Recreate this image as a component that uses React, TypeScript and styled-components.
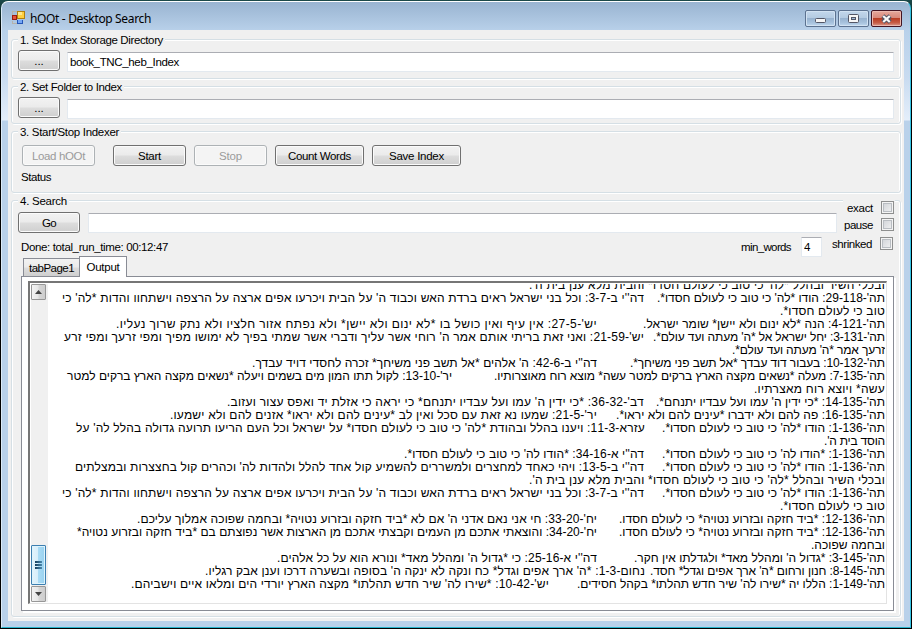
import React, { useLayoutEffect, useRef, useState } from 'react';
import styled, { createGlobalStyle, css } from 'styled-components';

const GlobalStyle = createGlobalStyle`
  *, *::before, *::after { box-sizing: border-box; }
  html, body { margin: 0; padding: 0; background: #000; overflow: hidden; }
  body {
    font-family: "Liberation Sans", Arial, sans-serif;
    font-size: 11.5px;
    line-height: 14px;
    color: #000;
  }
`;

const Desktop = styled.div`
  width: 912px;
  height: 629px;
  padding: 1px;
  background: linear-gradient(#1b4a4a, #000 30px);
`;

const Window = styled.div`
  height: 627px;
  display: flex;
  flex-direction: column;
  padding: 0 6px 6px;
  border: 1px solid #fff;
  border-left-color: #dcebf8;
  border-right-color: #35c4e4;
  border-bottom-color: #28b4cc;
  border-radius: 7px 7px 0 0;
  background: linear-gradient(#99b4d1 0, #b9d1ea 29px, #c8dbf0 75px, #e4eefa 118px, #b9d1ea 119px);
`;

const TitleBar = styled.header`
  flex: none;
  height: 28px;
  display: flex;
  align-items: flex-start;
  padding: 8px 2px 0 4px;
`;

const TitleIcon = styled.svg`
  width: 14px;
  height: 14px;
  margin-top: 1px;
`;

const Title = styled.div`
  margin: 1px auto 0 4px;
  font-family: "Noto Sans", sans-serif;
  font-size: 12px;
  line-height: 16px;
`;

const Captions = styled.div`
  display: flex;
  gap: 2px;
`;

const CaptionButton = styled.button<{ $close?: boolean }>`
  width: 31px;
  height: 17px;
  display: flex;
  align-items: center;
  justify-content: center;
  padding: 0;
  border: 1px solid ${p => (p.$close ? '#431422' : '#5c7290')};
  border-radius: 2px;
  background: ${p =>
    p.$close
      ? 'linear-gradient(#e5a89c 0, #d9897b 45%, #b93d24 50%, #c65c45 78%, #d99b90 100%)'
      : 'linear-gradient(#c3d7ec 0, #b4cbe2 45%, #98b3d0 50%, #a7c2dd 78%, #c0d8ee 100%)'};
  box-shadow: inset 0 0 0 1px ${p => (p.$close ? '#ebb9b0' : '#d2e2f2')};
`;

const Client = styled.main`
  flex: 1;
  min-height: 0;
  display: flex;
  flex-direction: column;
  gap: 7px;
  padding: 9px 3px 4px;
  background: #f0f0f0;
`;

const Group = styled.section<{ $h: number }>`
  flex: none;
  height: ${p => p.$h}px;
  border: 1px solid #d5dfe5;
  border-radius: 3px;
  box-shadow: 1px 1px 0 #fff, inset 1px 1px 0 #fff, inset -1px 0 0 #fff;
`;

const Legend = styled.div`
  width: max-content;
  height: 14px;
  margin: -7px 0 0 6px;
  padding: 0 2px;
  background: #f0f0f0;
`;

const Row = styled.div<{ $top: number; $left: number; $gap: number }>`
  display: flex;
  align-items: flex-start;
  gap: ${p => p.$gap}px;
  padding: ${p => p.$top}px 0 0 ${p => p.$left}px;
`;

const Button = styled.button<{ $w: number }>`
  flex: none;
  width: ${p => p.$w}px;
  height: 21px;
  display: flex;
  align-items: center;
  justify-content: center;
  padding: 0;
  border: 1px solid #707070;
  border-radius: 3px;
  background: linear-gradient(#f2f2f2 0, #ebebeb 48%, #dddddd 52%, #cfcfcf 100%);
  box-shadow: inset 0 0 0 1px #fbfbfb;
  color: #000;
  font: inherit;
  ${p =>
    p.disabled &&
    css`
      border-color: #adb2b5;
      background: #f4f4f4;
      color: #9b9b9b;
    `}
`;

const TextBox = styled.input<{ $w: number }>`
  width: ${p => p.$w}px;
  height: 20px;
  padding: 0 2px;
  border: 1px solid #e3e9ef;
  border-top-color: #abadb3;
  border-radius: 1px;
  outline: none;
  background: #fff;
  color: #000;
  font: inherit;
  line-height: 19px;
`;

const PathBox = styled(TextBox)`
  margin-top: 2px;
`;

const StatusLabel = styled.div`
  margin: 4px 0 0 9px;
`;

const SearchHead = styled.div`
  display: flex;
  height: 55px;
`;

const SearchMain = styled.div`
  flex: none;
  width: 831px;
`;

const QueryBox = styled(TextBox)`
  margin-top: 1px;
`;

const ResultRow = styled.div`
  display: flex;
  align-items: center;
  height: 20px;
  margin-top: 4px;
  padding: 0 21px 0 9px;
`;

const MinWords = styled.label`
  display: flex;
  align-items: center;
  gap: 10px;
  margin-left: auto;
`;

const Checks = styled.div`
  flex: none;
  width: 52px;
  display: flex;
  flex-direction: column;
  align-items: flex-end;
`;

const CheckRow = styled.label<{ $top: number; $right: number }>`
  display: flex;
  align-items: center;
  gap: 8px;
  height: 13px;
  margin-top: ${p => p.$top}px;
  padding: 0 ${p => p.$right}px 0 4px;
  background: #f0f0f0;
  box-shadow: 0 -1px 0 #f0f0f0;
  white-space: nowrap;
`;

const CheckBox = styled.span`
  flex: none;
  width: 13px;
  height: 13px;
  border: 1px solid #8e8f8f;
  background: linear-gradient(135deg, #cdd0d5, #f4f4f4);
  box-shadow: inset 0 0 0 1px #f4f4f4, inset 0 0 0 2px #b9bdc2;
`;

const TabStrip = styled.div`
  display: flex;
  align-items: flex-end;
  height: 20px;
  padding-left: 11px;
`;

const Tab = styled.div<{ $active?: boolean }>`
  height: ${p => (p.$active ? 21 : 18)}px;
  width: ${p => (p.$active ? 48 : 56)}px;
  margin-bottom: ${p => (p.$active ? -1 : 0)}px;
  padding-top: ${p => (p.$active ? 3 : 2)}px;
  text-align: center;
  border: 1px solid #898c95;
  border-bottom: 0;
  border-right-width: ${p => (p.$active ? 1 : 0)}px;
  background: ${p => (p.$active ? '#fff' : 'linear-gradient(#f2f2f2, #ebebeb 48%, #dddddd 52%, #cfcfcf)')};
  z-index: 1;
`;

const TabPanel = styled.div`
  width: 873px;
  height: 335px;
  margin-left: 9px;
  padding: 4px 6px;
  border: 1px solid #898c95;
  background: #fff;
  box-shadow: 2px 2px 0 #fff;
`;

const OutputBox = styled.div`
  height: 323px;
  display: flex;
  border: 2px solid #767676;
  border-right: 1px solid #e3e3e3;
  border-bottom: 1px solid #e3e3e3;
`;

const ScrollBar = styled.div`
  flex: none;
  width: 17px;
  display: flex;
  flex-direction: column;
  margin: 1px 0 1px 1px;
  background: #f0f0f0;
`;

const ScrollButton = styled.div`
  width: 15px;
  height: 16px;
  display: flex;
  align-items: center;
  justify-content: center;
  border: 1px solid #979797;
  border-radius: 1px;
  background: linear-gradient(90deg, #f3f3f3, #e6e6e6 48%, #d6d6d6 52%, #cdcdcd);
`;

const Thumb = styled.div`
  width: 15px;
  height: 40px;
  margin: auto 0 1px;
  display: flex;
  flex-direction: column;
  align-items: center;
  justify-content: center;
  gap: 1px;
  border: 1px solid #3c7fb1;
  border-radius: 1px;
  background: linear-gradient(90deg, #e3f4fc, #d6eefb 45%, #a9dbf5 50%, #98d1ef);
  box-shadow: inset 0 0 0 1px #ddf3fc;
`;

const Grip = styled.i`
  width: 7px;
  height: 2px;
  background: linear-gradient(90deg, #17415f, #4a87ac);
`;

const Lines = styled.div`
  flex: 1;
  min-width: 0;
  margin: 1px 1px 0 0;
  overflow: hidden;
  direction: rtl;
  font-size: 12px;
`;

const Line = styled.div`
  display: flex;
  height: 13px;
  line-height: 13px;
  &:first-child { margin-top: -5px; }
`;

const Piece = styled.span<{ $w: number; $gap: number }>`
  flex: none;
  width: ${p => p.$w}px;
  margin-right: ${p => p.$gap}px;
  white-space: nowrap;
`;

const Fitted = styled.span`
  display: inline-block;
  white-space: pre;
`;

/** Spreads a run of text evenly over a given width. */
function Fit({ w, children }: { w: number; children: string }) {
  const ref = useRef<HTMLSpanElement>(null);
  const [spacing, setSpacing] = useState(0);
  useLayoutEffect(() => {
    const el = ref.current;
    if (!el) return;
    el.style.letterSpacing = '0px';
    const next = (w - el.getBoundingClientRect().width) / children.length;
    el.style.letterSpacing = `${next}px`;
    setSpacing(next);
  }, [w, children]);
  return (
    <Fitted ref={ref} style={{ letterSpacing: spacing }}>
      {children}
    </Fitted>
  );
}

// text, width, distance from the piece to its right
type Run = [string, number, number?];

const TOV = "*לה' כי טוב כי לעולם חסדו*";
const BAYIT = `דה''י ב-3-7: וכל בני ישראל ראים ברדת האש וכבוד ה' על הבית ויכרעו אפים ארצה על הרצפה וישתחוו והדות *לה' כי`;
const KLEI = `ובכלי השיר ובהלל ${TOV} והבית מלא ענן בית ה'.`;
const HODU = `תה'-1-136: הודו ${TOV}.`;
const BEYAD = "תה'-12-136: *ביד חזקה ובזרוע נטויה* כי לעולם חסדו.";

const output: Run[][] = [
  [[KLEI, 356]],
  [[`תה'-29-118: הודו ${TOV}.`, 228], [BAYIT, 582, 13]],
  [['טוב כי לעולם חסדו*.', 105]],
  [["תה'-4-121: הנה *לא ינום ולא יישן* שומר ישראל.", 242], ["יש'-27-5: אין עיף ואין כושל בו *לא ינום ולא יישן* ולא נפתח אזור חלציו ולא נתק שרוך נעליו.", 481, 46]],
  [["תה'-3-131: יחל ישראל אל *ה' מעתה ועד עולם*.", 232], ["יש'-21-59: ואני זאת בריתי אותם אמר ה' רוחי אשר עליך ודברי אשר שמתי בפיך לא ימושו מפיך ומפי זרעך ומפי זרע", 580, 9]],
  [["זרעך אמר *ה' מעתה ועד עולם*.", 153]],
  [["תה'-10-132: בעבור דוד עבדך *אל תשב פני משיחך*.", 255], ["דה''י ב-42-6: ה' אלהים *אל תשב פני משיחך* זכרה לחסדי דויד עבדך.", 345, 33]],
  [["תה'-7-135: מעלה *נשאים מקצה הארץ ברקים למטר עשה* מוצא רוח מאוצרותיו.", 391], ["יר'-13-10: לקול תתו המון מים בשמים ויעלה *נשאים מקצה הארץ ברקים למטר", 385, 42]],
  [['עשה* ויוצא רוח מאצרתיו.', 131]],
  [["תה'-14-135: *כי ידין ה' עמו ועל עבדיו יתנחם*.", 229], ["דב'-36-32: *כי ידין ה' עמו ועל עבדיו יתנחם* כי יראה כי אזלת יד ואפס עצור ועזוב.", 417, 12]],
  [["תה'-16-135: פה להם ולא ידברו *עינים להם ולא יראו*.", 269], ["יר'-21-5: שמעו נא זאת עם סכל ואין לב *עינים להם ולא יראו* אזנים להם ולא ישמעו.", 427, 19]],
  [[HODU, 223], [`עזרא-11-3: ויענו בהלל ובהודת ${TOV} על ישראל וכל העם הריעו תרועה גדולה בהלל לה' על`, 569, 17]],
  [["הוסד בית ה'.", 61]],
  [["תה'-1-136: *הודו לה' כי טוב כי לעולם חסדו*.", 223], ["דה''י א-34-16: *הודו לה' כי טוב כי לעולם חסדו*.", 240, 18]],
  [[HODU, 223], ["דה''י ב-13-5: ויהי כאחד למחצרים ולמשררים להשמיע קול אחד להלל ולהדות לה' וכהרים קול בחצצרות ובמצלתים", 569, 18]],
  [[KLEI, 356]],
  [[HODU, 223], [BAYIT, 582, 18]],
  [['טוב כי לעולם חסדו*.', 105]],
  [[BEYAD, 266], ["יח'-33-20: חי אני נאם אדני ה' אם לא *ביד חזקה ובזרוע נטויה* ובחמה שפוכה אמלוך עליכם.", 460, 22]],
  [[BEYAD, 266], ["יח'-34-20: והוצאתי אתכם מן העמים וקבצתי אתכם מן הארצות אשר נפוצתם בם *ביד חזקה ובזרוע נטויה*", 520, 22]],
  [['ובחמה שפוכה.', 74]],
  [["תה'-3-145: *גדול ה' ומהלל מאד* ולגדלתו אין חקר.", 251], ["דה''י א-25-16: כי *גדול ה' ומהלל מאד* ונורא הוא על כל אלהים.", 320, 37]],
  [["תה'-8-145: חנון ורחום *ה' ארך אפים וגדל* חסד.", 235], ["נחום-1-3: *ה' ארך אפים וגדל* כח ונקה לא ינקה ה' בסופה ובשערה דרכו וענן אבק רגליו.", 440, 5]],
  [["תה'-1-149: הללו יה *שירו לה' שיר חדש תהלתו* בקהל חסידים.", 308], ["יש'-10-42: *שירו לה' שיר חדש תהלתו* מקצה הארץ יורדי הים ומלאו איים וישביהם.", 418, 28]],
];

function AppIcon() {
  return (
    <TitleIcon viewBox="0 0 14 14" shapeRendering="crispEdges">
      <path d="M.5 9.5v3h4M.5 4V.5H5" fill="none" stroke="#b6b2aa" />
      <rect x="0" y="4" width="5" height="5" fill="#9b1c10" />
      <rect x="1" y="5" width="3" height="3" fill="#e2523b" />
      <rect x="5" y="0" width="8" height="8" fill="#b08010" />
      <rect x="6" y="1" width="6" height="6" fill="#ffcf3f" />
      <rect x="6" y="1" width="4" height="3" fill="#ffe88a" />
      <rect x="5" y="9" width="6" height="4" fill="#2456b8" />
      <rect x="6" y="9" width="4" height="3" fill="#75a7f5" />
    </TitleIcon>
  );
}

function MinimizeGlyph() {
  return (
    <svg width="13" height="9" viewBox="0 0 13 9">
      <rect x="1.5" y="4.5" width="10" height="4" rx="1" fill="#f6f6f6" stroke="#535666" />
    </svg>
  );
}

function MaximizeGlyph() {
  return (
    <svg width="11" height="9" viewBox="0 0 11 9">
      <rect x=".5" y=".5" width="10" height="8" rx="1" fill="#f6f6f6" stroke="#535666" />
      <rect x="3.5" y="3.5" width="4" height="2" fill="#9fb9d5" stroke="#535666" />
    </svg>
  );
}

function CloseGlyph() {
  return (
    <svg width="13" height="10" viewBox="0 0 13 10">
      <path d="M2.8 2l7.4 6M10.2 2L2.8 8" stroke="#535666" strokeWidth="4.4" />
      <path d="M3.2 2l6.6 6M9.8 2L3.2 8" stroke="#f8f8f8" strokeWidth="2.3" />
    </svg>
  );
}

function Arrow({ up }: { up?: boolean }) {
  return (
    <svg width="7" height="4" viewBox="0 0 7 4">
      <path d={up ? 'M0 4L3.5 0 7 4z' : 'M0 0h7L3.5 4z'} fill="#444" />
    </svg>
  );
}

export default function App() {
  return (
    <Desktop>
      <GlobalStyle />
      <Window>
        <TitleBar>
          <AppIcon />
          <Title><Fit w={121}>hOOt - Desktop Search</Fit></Title>
          <Captions>
            <CaptionButton aria-label="Minimize"><MinimizeGlyph /></CaptionButton>
            <CaptionButton aria-label="Maximize"><MaximizeGlyph /></CaptionButton>
            <CaptionButton $close aria-label="Close"><CloseGlyph /></CaptionButton>
          </Captions>
        </TitleBar>
        <Client>
          <Group $h={40}>
            <Legend><Fit w={143}>1. Set Index Storage Directory</Fit></Legend>
            <Row $top={3} $left={6} $gap={7}>
              <Button $w={42}>...</Button>
              <PathBox as="div" $w={827}><Fit w={109}>book_TNC_heb_Index</Fit></PathBox>
            </Row>
          </Group>
          <Group $h={38}>
            <Legend><Fit w={102}>2. Set Folder to Index</Fit></Legend>
            <Row $top={3} $left={6} $gap={7}>
              <Button $w={42}>...</Button>
              <PathBox $w={827} />
            </Row>
          </Group>
          <Group $h={62}>
            <Legend><Fit w={99}>3. Start/Stop Indexer</Fit></Legend>
            <Row $top={6} $left={10} $gap={8}>
              <Button $w={73} disabled><Fit w={53}>Load hOOt</Fit></Button>
              <Row $top={0} $left={10} $gap={8}>
                <Button $w={73}><Fit w={23}>Start</Fit></Button>
                <Button $w={73} disabled><Fit w={23}>Stop</Fit></Button>
                <Button $w={89}><Fit w={63}>Count Words</Fit></Button>
                <Button $w={89}><Fit w={55}>Save Index</Fit></Button>
              </Row>
            </Row>
            <StatusLabel><Fit w={30}>Status</Fit></StatusLabel>
          </Group>
          <Group $h={417}>
            <SearchHead>
              <SearchMain>
                <Legend><Fit w={47}>4. Search</Fit></Legend>
                <Row $top={4} $left={6} $gap={8}>
                  <Button $w={62}><Fit w={14}>Go</Fit></Button>
                  <QueryBox $w={749} />
                </Row>
                <ResultRow>
                  <Fit w={147}>Done: total_run_time: 00:12:47</Fit>
                  <MinWords>
                    <Fit w={50}>min_words</Fit>
                    <TextBox $w={21} defaultValue="4" />
                  </MinWords>
                </ResultRow>
              </SearchMain>
              <Checks>
                <CheckRow $top={0} $right={1}><Fit w={26}>exact</Fit><CheckBox /></CheckRow>
                <CheckRow $top={4} $right={1}><Fit w={29}>pause</Fit><CheckBox /></CheckRow>
                <CheckRow $top={6} $right={2}><Fit w={40}>shrinked</Fit><CheckBox /></CheckRow>
              </Checks>
            </SearchHead>
            <TabStrip>
              <Tab><Fit w={45}>tabPage1</Fit></Tab>
              <Tab $active><Fit w={33}>Output</Fit></Tab>
            </TabStrip>
            <TabPanel>
              <OutputBox>
                <ScrollBar>
                  <ScrollButton><Arrow up /></ScrollButton>
                  <Thumb><Grip /><Grip /><Grip /></Thumb>
                  <ScrollButton><Arrow /></ScrollButton>
                </ScrollBar>
                <Lines>
                  {output.map((line, i) => (
                    <Line key={i}>
                      {line.map(([text, width, gap = 0], j) => (
                        <Piece key={j} $w={width} $gap={gap}>
                          <Fit w={width}>{text}</Fit>
                        </Piece>
                      ))}
                    </Line>
                  ))}
                </Lines>
              </OutputBox>
            </TabPanel>
          </Group>
        </Client>
      </Window>
    </Desktop>
  );
}
